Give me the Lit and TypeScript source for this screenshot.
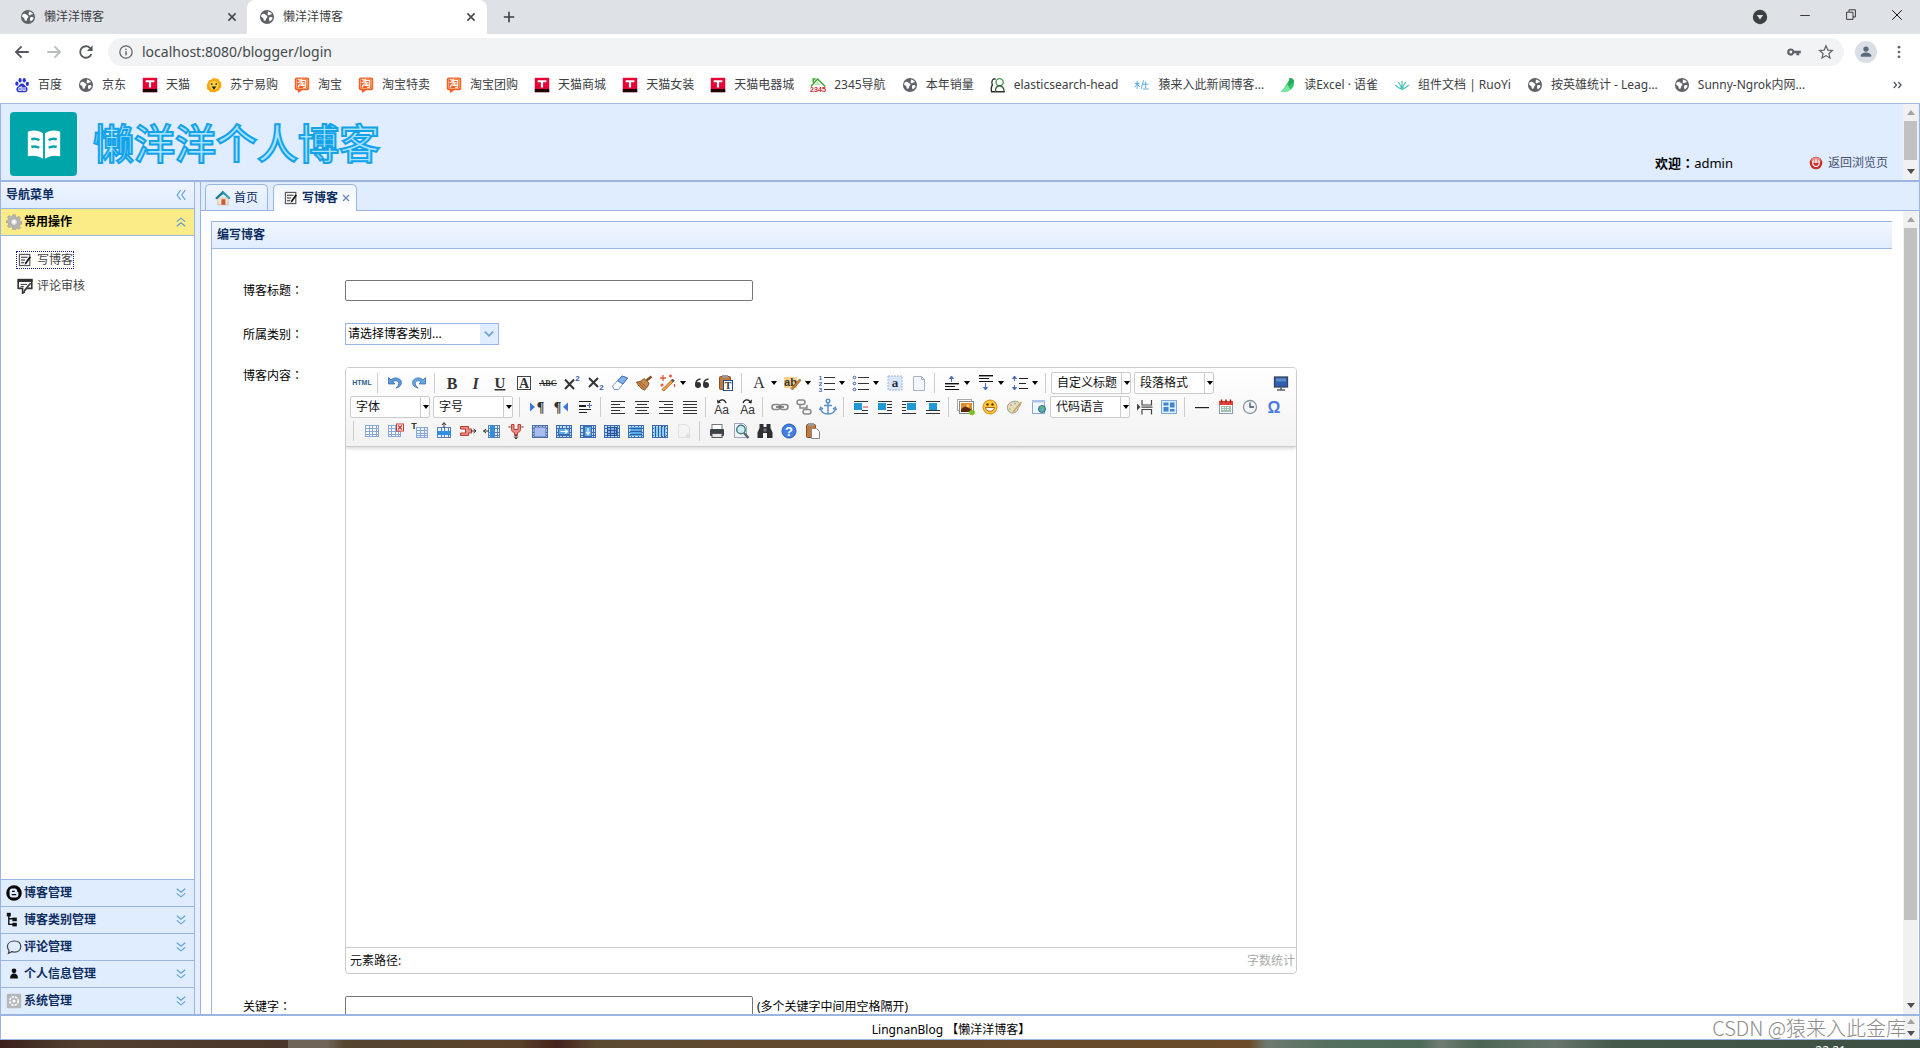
import { LitElement, html, css, svg, nothing, TemplateResult } from "lit";
import { customElement, property } from "lit/decorators.js";
import { classMap } from "lit/directives/class-map.js";
import { styleMap } from "lit/directives/style-map.js";

/* ---------- icon set, drawn on a 20 x 20 grid ---------- */

const lines = (rows: number[][], color = "#333") =>
  rows.map(([x, y, w]) => svg`<rect x=${x} y=${y} width=${w} height="1" fill=${color}></rect>`);

const grid = (x: number, y: number, w: number, h: number, cols: number, rows: number, fill = "#fff", stroke = "#5b7fb8") => svg`
  <rect x=${x + 0.5} y=${y + 0.5} width=${w - 1} height=${h - 1} fill=${fill} stroke=${stroke}></rect>
  ${Array.from({ length: cols - 1 }, (_, i) => svg`<rect x=${x + Math.round(((i + 1) * w) / cols)} y=${y} width="1" height=${h} fill=${stroke}></rect>`)}
  ${Array.from({ length: rows - 1 }, (_, i) => svg`<rect x=${x} y=${y + Math.round(((i + 1) * h) / rows)} width=${w} height="1" fill=${stroke}></rect>`)}`;

const serif = "Liberation Serif, serif";
const sans = "Liberation Sans, sans-serif";
const label = (t: string, x: number, y: number, size: number, extra: { weight?: string; style?: string; fill?: string; family?: string; deco?: string } = {}) => svg`
  <text x=${x} y=${y} text-anchor="middle" font-size=${size} font-family=${extra.family ?? serif}
    font-weight=${extra.weight ?? "normal"} font-style=${extra.style ?? "normal"} text-decoration=${extra.deco ?? "none"}
    fill=${extra.fill ?? "#333"}>${t}</text>`;

const ICONS: Record<string, TemplateResult | unknown> = {
  /* browser */
  globe: svg`<circle cx="10" cy="10" r="8.8" fill="#5f6368"></circle><path d="M3.200 6.800c2-1.600 4-1 5 .4s2 .6 2.300 2.300-1.500 1.700-1.700 3.200c-.2 1.300-1.500 2.800-2.600 1.700C5.500 13.500 6.100 12.300 4.900 11.300 4 10.700 2.800 10.400 2.600 9.200z" fill="#fff"></path><path d="M11 3c1.800 0 4.200 1.200 5.300 3.300-1 .7-2.200 .4-3.100 1.200-1 .9-2.500 .1-2.500-1.200 0-1.200 .8-1.700 .3-3.300z" fill="#fff"></path><path d="M13 10.500c1.300-.9 3.300-.4 4 .8-.4 1.600-2 3.600-3.500 4.200-.9-1.200-1.600-4-.5-5z" fill="#fff"></path>`,
  x: svg`<path d="M5.500 5.500l9 9m0-9l-9 9" stroke="#45494d" stroke-width="2" fill="none"></path>`,
  tabx: svg`<path d="M4 4l12 12m0-12L4 16" stroke="#6b87b5" stroke-width="2.600" fill="none"></path>`,
  plus: svg`<path d="M10 3.500v13M3.500 10h13" stroke="#3c4043" stroke-width="2" fill="none"></path>`,
  back: svg`<path d="M17.500 10H3.500M9.500 3.800L3.300 10l6.200 6.200" stroke="#54585d" stroke-width="2" fill="none"></path>`,
  forward: svg`<path d="M2.500 10h14M10.500 3.800l6.200 6.200-6.200 6.200" stroke="#b9bcc0" stroke-width="2" fill="none"></path>`,
  reload: svg`<path d="M15.900 12.300a6.400 6.400 0 1 1-1.300-6.700" stroke="#54585d" stroke-width="2" fill="none"></path><path d="M17.300 2.500v6.300h-6.300z" fill="#54585d"></path>`,
  info: svg`<circle cx="10" cy="10" r="7.700" stroke="#5f6368" stroke-width="1.600" fill="none"></circle><path d="M10 9v5.200M10 5.800v1.800" stroke="#5f6368" stroke-width="1.800"></path>`,
  key: svg`<path d="M6 5.500a4.500 4.500 0 1 0 4.200 6H13V14h3.500v-2.500H18.500V8.500H10.200A4.500 4.500 0 0 0 6 5.500z" fill="#5f6368"></path><circle cx="6" cy="10" r="1.800" fill="#f1f3f4"></circle>`,
  star: svg`<path d="M10 2.300l2.300 5.300 5.700 .5-4.300 3.800 1.300 5.600-5-3-5 3 1.300-5.600L2 8.100l5.700-.5z" stroke="#5f6368" stroke-width="1.500" fill="none"></path>`,
  person: svg`<circle cx="10" cy="6.300" r="3.300" fill="#5a6a7c"></circle><path d="M3.500 16v-1.500c0-2.700 4.300-3.900 6.500-3.900s6.500 1.200 6.500 3.900V16z" fill="#5a6a7c"></path>`,
  dots: svg`<g fill="#5f6368"><circle cx="10" cy="4" r="1.700"></circle><circle cx="10" cy="10" r="1.700"></circle><circle cx="10" cy="16" r="1.700"></circle></g>`,
  badge: svg`<circle cx="10" cy="10" r="9" fill="#3c4043"></circle><path d="M6 7.500h8L10 13z" fill="#dee1e6"></path>`,
  min: svg`<rect x="4" y="10" width="12" height="1" fill="#111"></rect>`,
  restore: svg`<path d="M4.500 6.500h8v9h-8zM7.500 6V3.500h8v9h-3" fill="none" stroke="#111"></path>`,
  winclose: svg`<path d="M4 4l12 12M16 4L4 16" stroke="#111" stroke-width="1.200"></path>`,
  baidu: svg`<g fill="#2a32d6"><ellipse cx="3.600" cy="8.300" rx="2" ry="2.700"></ellipse><ellipse cx="7.600" cy="4" rx="2" ry="2.900"></ellipse><ellipse cx="12.800" cy="4" rx="2" ry="2.900"></ellipse><ellipse cx="16.700" cy="8.700" rx="2" ry="2.700"></ellipse><path d="M10 8c2.500 0 3.500 2.800 5.500 4.300 2.600 2 1.800 6.700-1.700 6.700H6.200c-3.500 0-4.300-4.700-1.700-6.700C6.500 10.800 7.500 8 10 8z"></path></g>${label("du", 10, 17.5, 8, { fill: "#fff", family: sans, weight: "bold" })}`,
  tmall: svg`<rect x="1" y="1" width="18" height="18" fill="#e60033"></rect><rect x="1" y="15" width="18" height="4" fill="#1c0206"></rect><path d="M4.500 4h11v2.600h-4.100V13H8.600V6.600H4.500z" fill="#fff"></path>`,
  suning: svg`<path d="M10 .8l2.400 1.500 2.900 0 1.300 2.600 2.500 1.700-.4 2.900 .7 2.900-2.200 2-1 2.700-2.900 .6-2.300 1.600-3-.6-2.900 .1L3.500 16.600 1.200 14.900l.2-2.900L.7 9.300l1.900-2.200 .8-2.800 2.800-.8z" fill="#f9a809"></path><circle cx="10" cy="10.500" r="5.500" fill="#ffd04a"></circle><circle cx="7.200" cy="8.800" r="1.100" fill="#222"></circle><circle cx="12.800" cy="8.800" r="1.100" fill="#222"></circle><path d="M7 12h6l-3 4z" fill="#222"></path>`,
  taobao: svg`<rect x="1" y=".5" width="18" height="16" rx="2.500" fill="#ef5a1a"></rect><path d="M4.500 15.500h6.500L5.500 20z" fill="#ef5a1a"></path><rect x="3" y="2.500" width="14" height="12" rx="1.500" fill="none" stroke="#fbd3bd" stroke-width=".8"></rect>${label("淘", 10, 13, 12, { fill: "#fff", family: "Noto Sans CJK SC, sans-serif", weight: "bold" })}`,
  house2345: svg`<path d="M1 12L9.500 2.500 19 12" fill="none" stroke="#39a52c" stroke-width="1.800"></path><path d="M4 7V2.500h3" stroke="#39a52c" stroke-width="1.800" fill="none"></path><path d="M9.500 5l-4 5h8z" fill="#bfe6b8"></path>${label("2345", 10, 19.3, 9, { fill: "#d2282a", family: sans, weight: "bold" })}`,
  elastic: svg`<path d="M7 2.500H4.500C2 4 2.200 8 3 10c-1.500 2-1.500 6-1 8.500h16.500" fill="none" stroke="#2c2f2c" stroke-width="1.800"></path><circle cx="12" cy="6.500" r="4.500" fill="#fff" stroke="#4b9a4d" stroke-width="1.800"></circle><path d="M7 18.500c-1-4 1.500-7.500 5-7.500s6 3.500 5.500 7.500" fill="none" stroke="#3a5a3a" stroke-width="1.800"></path>`,
  news: svg`<g stroke="#5aa9e6" stroke-width="1.200" fill="none"><path d="M1 8h6M4 5v10M4 8.500L1 13m3-4.500l3 4"></path><path d="M12 4l-3 11M11 9h7M14.500 6v8M11.500 15h7"></path></g>`,
  yuque: svg`<path d="M12 1c3 .5 5.500 2 5.500 4.500C18.500 14 11 20 1 18.500c2.800-2.500 5.500-6 7.500-10C9.500 6.500 12 4 12 1z" fill="#2fc66a"></path><path d="M12 1c3 .5 5.500 2 5.500 4.500L10 12z" fill="#25a85a"></path><path d="M1 18.500c3.500-2 6-5 8-9l4 6c-3 2.500-7 3.500-12 3z" fill="#7be89f"></path>`,
  ruoyi: svg`<g fill="none" stroke="#4fc3b5" stroke-width="1.500"><path d="M10 15.500V5M10 15.500C8.500 12 7.500 9 5.500 6.500M10 15.500c1.500-3.500 2.500-6.500 4.500-9M10 15.500C7 14.500 4 12.500 1.500 10M10 15.500c3-1 6-3 8.500-5.500"></path></g>`,
  more: svg`<path d="M3 5l4.500 5L3 15M10.500 5l4.500 5-4.500 5" fill="none" stroke="#54585d" stroke-width="2.200"></path>`,

  /* page */
  book: svg`<g fill="#fff"><path d="M1.500 3.500c3-1 5.500-.8 8 .8v13.500C7 16.200 4.500 15.800 1.500 16.500z"></path><path d="M18.500 3.500c-3-1-5.500-.8-8 .8v13.500c2.500-1.600 5-2 8-1.300z"></path></g><g stroke="#00a5a9" stroke-width="1.300" fill="none"><path d="M3.300 7.500c1.500-.4 3-.3 4.200 .5M3.300 11.500c1.500-.4 3-.3 4.200 .5M16.700 7.500c-1.500-.4-3-.3-4.200 .5M16.700 11.500c-1.500-.4-3-.3-4.200 .5"></path></g>`,
  power: svg`<circle cx="10" cy="10" r="9" fill="#c9302c"></circle><ellipse cx="10" cy="6" rx="6.500" ry="4.300" fill="#e58d88"></ellipse><path d="M7 6.500a4.700 4.700 0 1 0 6 0M10 4.500V10" fill="none" stroke="#fff" stroke-width="1.700"></path>`,
  gear: svg`<g fill="#b5b5b5" stroke="#8b8b8b" stroke-width=".6"><path d="M8.500 1h3l.5 2.500 2 .8 2.200-1.400 2 2-1.400 2.200 .8 2 2.400 .5v2.800l-2.400 .5-.8 2 1.400 2.200-2 2-2.200-1.400-2 .8-.5 2.500h-3L8 16.500l-2-.8-2.200 1.400-2-2 1.400-2.200-.8-2L0 10.400V8.600l2.400-.5 .8-2-1.400-2.200 2-2L6 3.300l2-.8z"></path></g><circle cx="10" cy="10" r="4.300" fill="#e3e3e3" stroke="#999"></circle><circle cx="10" cy="10" r="1.800" fill="#fff"></circle>`,
  chevUp: svg`<path d="M4 9.500l6-5 6 5M4 16l6-5 6 5" fill="none" stroke="#5b9bd5" stroke-width="1.600"></path>`,
  chevDown: svg`<path d="M4 4l6 5 6-5M4 10.500l6 5 6-5" fill="none" stroke="#5ba0d5" stroke-width="1.600"></path>`,
  chevLeft: svg`<path d="M9.500 3l-5 7 5 7M16 3l-5 7 5 7" fill="none" stroke="#5b9bd5" stroke-width="1.500"></path>`,
  write: svg`<rect x="3" y="3" width="13" height="14" fill="#f5f5f5" stroke="#555" stroke-width="1.400"></rect><path d="M5 6.500h8M5 10h5M5 13.500h4" stroke="#333" stroke-width="1.400"></path><path d="M17.500 6.500l-5.500 8-2.500 1.500 .8-3L15.500 5.500z" fill="#111"></path>`,
  review: svg`<path d="M1.500 3h17v10H12M1.500 3v10H7V19l3-2" fill="none" stroke="#333" stroke-width="2"></path><rect x=".5" y="1" width="19" height="4" fill="#333"></rect><path d="M4.500 8h8M4.500 10.500h4" stroke="#333" stroke-width="1.200"></path><path d="M18 7l-7 9-3 3 .5-4L16 6z" fill="#444"></path>`,
  home: svg`<path d="M3.500 10h13v8.500h-13z" fill="#f6e7d2" stroke="#b5916b" stroke-width=".6"></path><path d="M10 1L.5 10l1.600 1.700L10 5l7.900 6.700L19.500 10z" fill="#2a9bb0"></path><path d="M10 1L.5 10l1.600 1.700L10 5z" fill="#1f7d95"></path><rect x="8" y="11.500" width="5" height="7" fill="#c75b39"></rect>`,
  blogger: svg`<circle cx="10" cy="10" r="9.700" fill="#050505"></circle><path d="M7.500 4.500h3.500c1.800 0 3 1.300 3 3 0 1 .2 1.500 1.500 1.500V12.500c0 2-1.300 3-3 3h-5c-1.800 0-3-1.200-3-3v-5c0-1.800 1.200-3 3-3z" fill="#e0ecff"></path><path d="M7.500 8h3.500M7.200 12h5.600" stroke="#050505" stroke-width="1.500"></path>`,
  tree: svg`<path d="M3.500 2.500v13h6M3.500 8.500h6" fill="none" stroke="#111" stroke-width="1.700"></path><rect x="1" y="1" width="5" height="4.500" fill="#111"></rect><rect x="8" y="7" width="5.500" height="4.500" fill="#111"></rect><rect x="8" y="13.500" width="5.500" height="4.500" fill="#111"></rect>`,
  bubble: svg`<path d="M10.500 2.500c5 0 8 2.800 8 6.800s-3 7-8 7c-1.200 0-2.300-.2-3.300-.5L3 18l.8-3.700C2.400 13 1.800 11.300 1.800 9.500c0-4 3.500-7 8.700-7z" fill="none" stroke="#444" stroke-width="1.500"></path>`,
  user: svg`<circle cx="10" cy="6" r="3" fill="#111"></circle><path d="M5 15.500c0-4 2-6 5-6s5 2 5 6z" fill="#111"></path>`,
  system: svg`<rect x="1" y="1" width="18" height="18" rx="1.500" fill="#b5b8bb"></rect><circle cx="10" cy="10" r="5.300" fill="none" stroke="#fff" stroke-width="2" stroke-dasharray="3 1.300"></circle><circle cx="10" cy="10" r="2" fill="#fff"></circle>`,
  down: svg`<path d="M3 6l7 7 7-7" fill="none" stroke="#6fa3d8" stroke-width="3"></path>`,

  /* editor */
  source: label("HTML", 10, 12, 7, { family: sans, fill: "#2f5f8f", weight: "bold" }),
  undo: svg`<path d="M3.500 4.500v6.500h6.500L7.800 8.800C9 7.500 12.500 7.200 13.500 9.300c.8 1.900-.3 3.900-2.700 5.700C15 14.300 17 11.500 16.300 8.500 15.400 4.800 9.500 3.500 5.800 6.800z" fill="#5a97de" stroke="#2d63a8" stroke-width=".7"></path>`,
  redo: svg`<path d="M16.500 4.500v6.500h-6.500L12.200 8.800C11 7.500 7.500 7.200 6.500 9.300c-.8 1.900 .3 3.900 2.700 5.700C5 14.300 3 11.500 3.700 8.500 4.600 4.800 10.500 3.500 14.200 6.800z" fill="#6aa6e4" stroke="#2d63a8" stroke-width=".7"></path>`,
  bold: label("B", 10, 15.5, 16, { weight: "bold" }),
  italic: label("I", 9.5, 15.5, 16, { weight: "bold", style: "italic" }),
  underline: label("U", 10, 15, 15, { weight: "bold", deco: "underline" }),
  fontborder: svg`<rect x="3.500" y="3.500" width="13" height="13" fill="#fff" stroke="#444"></rect>${label("A", 10, 15, 14, { weight: "bold" })}`,
  strike: svg`${label("ABC", 10, 13, 8, { weight: "bold" })}<rect x="1" y="10" width="18" height="1" fill="#222"></rect>`,
  sup: svg`<path d="M3 6.500l9 9.500M12 6.500L3 16" stroke="#333" stroke-width="2"></path>${label("2", 15.5, 8, 8, { weight: "bold", fill: "#3759a8", family: sans })}`,
  sub: svg`<path d="M3 5l9 9M12 5l-9 9" stroke="#333" stroke-width="2"></path>${label("2", 15.5, 17, 8, { weight: "bold", fill: "#3759a8", family: sans })}`,
  eraser: svg`<path d="M2.500 13L12 3l5.500 2-9 11.500H4z" fill="#fff" stroke="#6f94c9"></path><path d="M7.500 8L12 3l5.500 2-4.500 6z" fill="#7fb0ea" stroke="#4a76b5"></path>`,
  broom: svg`<path d="M17.500 3.500l-5 4" stroke="#8a4a1c" stroke-width="2.400"></path><path d="M2.500 9c3 0 5.500-1 7.500-3.500l5 4.500c-.5 2.500-2 5-4.500 7-3.500-1-6.500-4.500-8-8z" fill="#c98b4b" stroke="#8a5527"></path><path d="M6 8.500l6 5.500M4.500 9.500l6 6" stroke="#8a5527" stroke-width=".8"></path>`,
  wand: svg`<path d="M4 16.500L14.500 6l1.800 1.800L6 18z" fill="#e8a04a" stroke="#a9601a" stroke-width=".8"></path><path d="M13 7.500l1.500-1.500 1.800 1.800-1.500 1.500z" fill="#555"></path><path d="M5 2v6M2 5h6M12.500 1.500v3M11 3h3M4 10.500v3M2.500 12h3M16.500 11v3" stroke="#e2553a" stroke-width="1.300"></path>`,
  quote: svg`<g fill="#333"><circle cx="6" cy="12" r="3"></circle><circle cx="14" cy="12" r="3"></circle></g><path d="M3.800 12C3.500 8.500 5 6.500 8.500 6M11.800 12c-.3-3.500 1.200-5.500 4.700-6" fill="none" stroke="#333" stroke-width="1.600"></path>`,
  pastetext: svg`<rect x="3.500" y="3.500" width="11" height="13" rx="1" fill="#c07a3c" stroke="#8a5022"></rect><rect x="6" y="2" width="6" height="3" fill="#999"></rect><rect x="7.500" y="7.500" width="9" height="10" fill="#fff" stroke="#2c4d80"></rect>${label("T", 12, 16, 10, { weight: "bold" })}`,
  paste: svg`<rect x="3.500" y="3.500" width="9" height="13" rx="1" fill="#c07a3c" stroke="#8a5022"></rect><rect x="5" y="2" width="6" height="3" fill="#999"></rect><path d="M8.500 7.500h5l3 3v7h-8z" fill="#fff" stroke="#888"></path>`,
  forecolor: label("A", 10, 15, 16, {}),
  backcolor: svg`<rect x="1" y="4" width="13" height="11" fill="#fbd08a"></rect>${label("ab", 7.5, 13, 11, { family: sans, weight: "bold" })}<path d="M8 15.500L16.500 6l1.500 1.300L9.500 17z" fill="#c78234" stroke="#7d4c18" stroke-width=".6"></path>`,
  ol: svg`${lines([[7, 4, 11], [7, 10, 11], [7, 16, 11]])}${label("1", 3.5, 6.5, 6, { fill: "#3759a8", family: sans, weight: "bold" })}${label("2", 3.5, 12.5, 6, { fill: "#3759a8", family: sans, weight: "bold" })}${label("3", 3.5, 18.5, 6, { fill: "#3759a8", family: sans, weight: "bold" })}`,
  ul: svg`${lines([[7, 4, 11], [7, 10, 11], [7, 16, 11]])}<g fill="none" stroke="#3759a8"><circle cx="3.500" cy="4.500" r="1.300"></circle><circle cx="3.500" cy="10.500" r="1.300"></circle><circle cx="3.500" cy="16.500" r="1.300"></circle></g>`,
  selectall: svg`<rect x="3" y="3" width="14" height="14" fill="#dbe6f8" stroke="#9db8e0" stroke-dasharray="2 1"></rect>${label("a", 10, 14, 13, { weight: "bold", fill: "#1d2c4d" })}`,
  cleardoc: svg`<path d="M4.500 3.500h8l3 3v11h-11z" fill="#f4f7fb" stroke="#a9b4c4"></path><path d="M12.500 3.500v3h3" fill="none" stroke="#a9b4c4"></path>`,
  rowtop: svg`${lines([[3, 10, 14], [3, 13, 10], [3, 16, 14]], "#111")}${lines([[3, 11, 14]], "#999")}<path d="M9.500 9V4M7.500 5.500l2-2.500 2 2.500z" stroke="#4c6cb8" fill="#4c6cb8"></path>`,
  rowbottom: svg`${lines([[3, 2, 14], [3, 5, 10], [3, 8, 14]], "#111")}${lines([[3, 3, 14]], "#999")}<path d="M9.500 10v5M7.500 14.500l2 2.500 2-2.500z" stroke="#4c6cb8" fill="#4c6cb8"></path>`,
  lineheight: svg`${lines([[9, 5, 9], [9, 10, 7], [9, 15, 9]], "#222")}<path d="M4.500 3v5M2.500 5.500l2-2.500 2 2.500zM4.500 12v5M2.500 14.500l2 2.500 2-2.500z" stroke="#4c6cb8" fill="#4c6cb8"></path>`,
  fullscreen: svg`<rect x="3.500" y="4" width="13" height="10" fill="#2f5fae" stroke="#39465e" stroke-width="1.300"></rect><rect x="5" y="5.500" width="10" height="3" fill="#5f8bd0"></rect><path d="M6 17h8M10 14v3" stroke="#5c6470" stroke-width="1.600"></path>`,
  ltr: svg`<path d="M3 5.500v9l5-4.500z" fill="#3f74d8"></path>${label("¶", 13.5, 15, 14, { weight: "bold" })}`,
  rtl: svg`${label("¶", 6.5, 15, 14, { weight: "bold" })}<path d="M17 5.500v9L12 10z" fill="#3f74d8"></path>`,
  indent: svg`${lines([[4, 4, 12], [4, 8, 7], [4, 9, 7], [4, 12, 12], [4, 15, 8]], "#222")}<path d="M14.500 6v5M12 8.500h5" stroke="#5575bb" stroke-width="1.200"></path>`,
  left: svg`${lines([[3, 4, 14], [3, 7, 9], [3, 10, 14], [3, 13, 9], [3, 16, 14]])}`,
  center: svg`${lines([[3, 4, 14], [5, 7, 10], [3, 10, 14], [5, 13, 10], [3, 16, 14]])}`,
  right: svg`${lines([[3, 4, 14], [8, 7, 9], [3, 10, 14], [8, 13, 9], [3, 16, 14]])}`,
  full: svg`${lines([[3, 4, 14], [3, 7, 14], [3, 10, 14], [3, 13, 14], [3, 16, 14]])}`,
  upper: svg`${label("Aa", 8.5, 17, 12, { family: sans })}<path d="M5.500 5c2-3 6-3 7.500 1" fill="none" stroke="#222" stroke-width="1.200"></path><path d="M4 2.500l.5 4 3.500-1z" fill="#222"></path>`,
  lower: svg`${label("Aa", 10.5, 17, 12, { family: sans })}<path d="M6 6c1.500-4 5.500-4 7.500-1" fill="none" stroke="#222" stroke-width="1.200"></path><path d="M15 2.500l-.5 4-3.500-1z" fill="#222"></path>`,
  link: svg`<g fill="none" stroke="#888" stroke-width="1.600"><rect x="2" y="7.500" width="8" height="5" rx="2.500"></rect><rect x="10" y="7.500" width="8" height="5" rx="2.500"></rect></g><path d="M6 10h8" stroke="#666" stroke-width="1.400"></path>`,
  unlink: svg`<g fill="none" stroke="#888" stroke-width="1.500"><rect x="3" y="3" width="8" height="4.500" rx="2.200"></rect><rect x="9" y="12.500" width="8" height="4.500" rx="2.200"></rect><path d="M6 7.500v3.500h7v-3"></path></g>`,
  anchor: svg`<g fill="none" stroke="#5b93cc" stroke-width="1.500"><circle cx="10" cy="4" r="1.800"></circle><path d="M10 6v11M6 8.500h8M2.500 11c.5 4 3.500 6 7.500 6s7-2 7.500-6M1.500 13l1.200-2.500 2.300 1.700M18.500 13l-1.200-2.500-2.300 1.700"></path></g>`,
  imgleft: svg`${lines([[3, 4, 14], [11, 13, 6], [3, 16, 14]])}<rect x="3" y="6" width="8" height="7" fill="#1f9ad6"></rect><path d="M12 10h5" stroke="#c43" stroke-width="1"></path>`,
  imgfloatl: svg`${lines([[3, 4, 14], [12, 7, 5], [12, 10, 5], [12, 13, 5], [3, 16, 14]])}<rect x="3" y="6" width="8" height="7" fill="#1f9ad6"></rect>`,
  imgfloatr: svg`${lines([[3, 4, 14], [3, 7, 4], [3, 10, 4], [3, 13, 4], [3, 16, 14]])}<rect x="8" y="6" width="9" height="7" fill="#1f9ad6"></rect>`,
  imgcenter: svg`${lines([[3, 4, 14], [3, 16, 14]])}<rect x="6" y="6" width="8" height="7" fill="#1f9ad6"></rect>${lines([[3, 13, 14]])}`,
  image: svg`<rect x="1.500" y="2.500" width="14" height="11" fill="#fff" stroke="#aaa"></rect><rect x="3.500" y="4.500" width="14" height="12" fill="#fff" stroke="#888"></rect><rect x="5" y="6" width="11" height="9" fill="#e08a2e"></rect><path d="M5 15v-3l4-2.500 7 3V15z" fill="#5a2708"></path><circle cx="12" cy="8.500" r="1.500" fill="#ffd76a"></circle><circle cx="16" cy="15.500" r="2.800" fill="#7cc21f"></circle>`,
  emotion: svg`<circle cx="10" cy="10" r="7" fill="#ffc83a" stroke="#d78a12"></circle><path d="M5.500 10.500h9c-.5 5-8.500 5-9 0z" fill="#fff" stroke="#8a4a0a" stroke-width=".8"></path><circle cx="7.500" cy="7.500" r="1.200" fill="#5a3205"></circle><circle cx="12.500" cy="7.500" r="1.200" fill="#5a3205"></circle>`,
  scrawl: svg`<path d="M4 8c2-4 9-5 11.500-2 2 2.500-1 4-1.500 6s-3 4.500-6.500 4C4 15.500 2.500 11 4 8z" fill="#e6dcc0" stroke="#a39a7c"></path><circle cx="7" cy="8" r="1.100" fill="#e5a08a"></circle><circle cx="11" cy="6.500" r="1.100" fill="#8fbde0"></circle><circle cx="6" cy="12" r="1.100" fill="#a0cf8e"></circle><path d="M17.500 5L9 15" stroke="#c9a468" stroke-width="1.500"></path>`,
  map: svg`<rect x="4.500" y="3.500" width="12" height="13" fill="#f3f6fb" stroke="#8aa5cf"></rect><rect x="4" y="3" width="13" height="2.500" fill="#a9c3ea"></rect><circle cx="14" cy="12" r="3.500" fill="#4fa3c7" stroke="#2c6d94"></circle><path d="M12.500 10c2-.5 3.500 1 2.200 2.300s-1.400 1-1.400 2.200" fill="none" stroke="#6fc05a" stroke-width="1.500"></path>`,
  pagebreak: svg`<g fill="none" stroke="#444" stroke-width="1.200"><path d="M7 3v5h9.500V3M7 17.500v-5h9.500v5M6.500 10.200h11"></path></g><path d="M2 6.500v7l3.500-3.500z" fill="#444"></path>`,
  template: svg`<rect x="2.500" y="3.500" width="15" height="13" fill="#dcecfb" stroke="#7fa9d6"></rect><g fill="#3f86cf"><rect x="4.500" y="5.500" width="5" height="3"></rect><rect x="4.500" y="10" width="5" height="4.500"></rect><rect x="11" y="5.500" width="4.500" height="5"></rect><rect x="11" y="12" width="4.500" height="2.500"></rect></g>`,
  hr: svg`<rect x="3" y="10" width="14" height="1.200" fill="#222"></rect>`,
  date: svg`<rect x="3.500" y="4.500" width="13" height="12" fill="#fff" stroke="#8a9ab5"></rect><rect x="3" y="4" width="14" height="4" fill="#e0413a"></rect><path d="M5.500 2.500v3M10 2.500v3M14.500 2.500v3" stroke="#a32019" stroke-width="1.500"></path>${grid(5, 9, 10, 6, 4, 3, "#fff", "#9fc3b0")}`,
  time: svg`<circle cx="10" cy="10" r="6.500" fill="#f2f5fa" stroke="#8d95a2" stroke-width="1.300"></circle><path d="M10 5.500V10h4" fill="none" stroke="#3c4a61" stroke-width="1.300"></path>`,
  spechars: label("Ω", 10, 15.5, 16, { weight: "bold", fill: "#4a7ae0", family: sans }),

  table: grid(3, 4, 14, 12, 4, 4, "#fff", "#88a7d4"),
  deltable: svg`${grid(2, 4, 13, 12, 4, 4, "#fff", "#88a7d4")}<rect x="10.500" y="3" width="7" height="7" fill="#fff" stroke="#d8362d"></rect><path d="M12 4.500l4 4m0-4l-4 4" stroke="#d8362d" stroke-width="1.400"></path>`,
  beforetable: svg`${grid(6, 6, 12, 11, 3, 4, "#e8f0fb", "#88a7d4")}${label("T", 4, 8, 9, { weight: "bold", family: sans })}`,
  insrow: svg`${grid(3, 6, 14, 11, 4, 3, "#e8f2fd", "#5b7fb8")}<rect x="3" y="10" width="14" height="4" fill="#2f8fe0"></rect><path d="M10 7V2M8 4l2-2.500L12 4" stroke="#333" fill="none"></path>`,
  delrow: svg`<path d="M2.500 5.500h8v2.500h3v4h-3v2.500h-8V12h5V8h-5z" fill="#e88d86" stroke="#c23b33"></path><path d="M13 10h5M15.500 8l2.500 2-2.500 2" stroke="#333" fill="none"></path>`,
  inscol: svg`${grid(6, 4, 12, 13, 4, 4, "#e8f2fd", "#5b7fb8")}<rect x="8" y="4" width="4" height="13" fill="#2f8fe0"></rect><path d="M7 10H1.500M4 8l-2.500 2L4 12" stroke="#333" fill="none"></path>`,
  delcol: svg`<path d="M5.500 3.500H8v5h4v-5h2.500v5c0 2-1.500 3-3 3v3h-3v-3c-1.500 0-3-1-3-3z" fill="#e88d86" stroke="#c23b33"></path><path d="M10 13v5M8 15.500l2 2.500 2-2.500M2.500 6h2M15.500 6h2" stroke="#333" fill="none"></path>`,
  merge: svg`${grid(2, 4, 16, 13, 5, 4, "#e8f2fd", "#4a6ea8")}<rect x="4" y="6" width="12" height="10" fill="#a9bdf0" stroke="#4a6ea8"></rect>`,
  mergeright: svg`${grid(2, 4, 16, 13, 5, 4, "#bfdcf7", "#3f6cae")}<rect x="4.500" y="7.500" width="11" height="6" fill="#5aa9ea" stroke="#3f6cae"></rect><path d="M6.500 10.500h6M11 8.500l2.500 2-2.500 2" stroke="#fff" stroke-width="1.200" fill="none"></path>`,
  mergedown: svg`${grid(2, 4, 16, 13, 5, 4, "#bfdcf7", "#3f6cae")}<rect x="6.500" y="5.500" width="7" height="10" fill="#5aa9ea" stroke="#3f6cae"></rect><path d="M10 7v6M8 11l2 2.500 2-2.500" stroke="#fff" stroke-width="1.200" fill="none"></path>`,
  splitcell: svg`${grid(2, 4, 16, 13, 5, 4, "#bfdcf7", "#3f6cae")}${grid(5, 6, 10, 9, 3, 3, "#7fb4ee", "#2d4f93")}`,
  splitrow: svg`${grid(2, 4, 16, 13, 5, 4, "#bfdcf7", "#3f6cae")}<rect x="4.500" y="6" width="11" height="9" fill="#5aa9ea"></rect>${lines([[4, 7, 12], [4, 10, 12], [4, 13, 12]], "#2d5f9f")}`,
  splitcol: svg`${grid(2, 4, 16, 13, 5, 4, "#bfdcf7", "#3f6cae")}<rect x="4" y="6" width="12" height="9" fill="#8ccbf5"></rect><path d="M5.500 5v11M8.500 5v11M11.500 5v11M14.500 5v11" stroke="#2d5f9f"></path>`,
  chart: svg`<g opacity=".25"><path d="M4.500 3.500h8l3 3v10h-11z" fill="#f2f2f2" stroke="#aaa"></path><circle cx="14" cy="15" r="2.500" fill="#9b9"></circle></g>`,
  print: svg`<rect x="5" y="3.500" width="10" height="5" fill="#fff" stroke="#777"></rect><rect x="3" y="8" width="14" height="7" rx="1" fill="#3d4148"></rect><rect x="5" y="12.500" width="10" height="4" fill="#e6e6e6" stroke="#555"></rect>`,
  preview: svg`<path d="M3.500 2.500h9l3 3v11h-12z" fill="#f2f6fb" stroke="#9aa7ba"></path><circle cx="10" cy="8.500" r="4.300" fill="#cdeef0" stroke="#4a7f8a" stroke-width="1.500"></circle><path d="M13 12l4.500 5" stroke="#5a5f66" stroke-width="2.300"></path>`,
  search: svg`<path d="M4.500 3h4v3h3V3h4v4l2 4.500V17h-5.500v-5H8v5H2.500v-5.500l2-4.500z" fill="#2e3034"></path><path d="M8.500 7.500h3v3h-3z" fill="#777"></path>`,
  help: svg`<circle cx="10" cy="10" r="7" fill="#3f7fe6" stroke="#2459b4"></circle>${label("?", 10, 14.5, 13, { weight: "bold", fill: "#fff", family: sans })}`,
};

const icon = (name: string, cls = "i20") => html`<svg class=${cls} viewBox="0 0 20 20" aria-hidden="true">${ICONS[name]}</svg>`;

/* full-width colon, centred in its cell */
const colon = html`<span class="colon">：</span>`;

type Tool = string | { select: string };

const TOOLBAR: Tool[][] = [
  ["source", "|", "undo", "redo", "|", "bold", "italic", "underline", "fontborder", "strike", "sup", "sub", "eraser", "broom", "wand+", "quote", "pastetext", "|",
    "forecolor+", "backcolor+", "ol+", "ul+", "selectall", "cleardoc", "|", "rowtop+", "rowbottom+", "lineheight+", "|", { select: "自定义标题" }, { select: "段落格式" }, ">", "fullscreen"],
  [{ select: "字体" }, { select: "字号" }, "|", "ltr", "rtl", "indent", "|", "left", "center", "right", "full", "|", "upper", "lower", "|", "link", "unlink", "anchor", "|",
    "imgleft", "imgfloatl", "imgfloatr", "imgcenter", "|", "image", "emotion", "scrawl", "map", { select: "代码语言" }, "pagebreak", "template", "|", "hr", "date", "time", "spechars"],
  ["|", "table", "deltable", "beforetable", "insrow", "delrow", "inscol", "delcol", "merge", "mergeright", "mergedown", "splitcell", "splitrow", "splitcol", "chart", "|", "print", "preview", "search", "help", "paste"],
];

const BOOKMARKS: [string, string][] = [
  ["baidu", "百度"], ["globe", "京东"], ["tmall", "天猫"], ["suning", "苏宁易购"], ["taobao", "淘宝"], ["taobao", "淘宝特卖"], ["taobao", "淘宝团购"],
  ["tmall", "天猫商城"], ["tmall", "天猫女装"], ["tmall", "天猫电器城"], ["house2345", "2345导航"], ["globe", "本年销量"], ["elastic", "elasticsearch-head"],
  ["news", "猿来入此新闻博客..."], ["yuque", "读Excel · 语雀"], ["ruoyi", "组件文档 | RuoYi"], ["globe", "按英雄统计 - Leag..."], ["globe", "Sunny-Ngrok内网..."],
];

const SECTIONS: [string, string][] = [
  ["blogger", "博客管理"], ["tree", "博客类别管理"], ["bubble", "评论管理"], ["user", "个人信息管理"], ["system", "系统管理"],
];

const shared = css`
  * { box-sizing: border-box; }
  button, input, select { font: inherit; color: inherit; margin: 0; padding: 0; }
  button { border: 0; background: none; display: flex; align-items: center; }
  a { color: inherit; text-decoration: none; }
  svg { display: block; flex: none; }
  .i20 { width: 20px; height: 20px; }
  .i18 { width: 18px; height: 18px; }
  .i16 { width: 16px; height: 16px; }
  .i14 { width: 14px; height: 14px; }
  .i12 { width: 12px; height: 12px; }
  .i10 { width: 10px; height: 10px; }
  .colon { font-family: "Noto Sans CJK TC", sans-serif; }
`;

/* ---------- vertical scroll bar ---------- */

@customElement("scroll-rail")
class ScrollRail extends LitElement {
  @property({ type: Number }) size = 0;
  @property({ type: Boolean }) short = false;
  static styles = css`
    * { box-sizing: border-box; }
    :host { display: flex; flex-direction: column; width: 15px; flex: none; margin-right: 1px; background: #f1f1f1; }
    .end { height: 17px; flex: none; display: flex; align-items: center; justify-content: center; }
    .tight .end { height: 11px; }
    .wrap { display: flex; flex-direction: column; flex: 1; min-height: 0; }
    .track { flex: 1; min-height: 0; padding: 0 1px; }
    .thumb { background: #c1c1c1; }
    .arrow { border: 4px solid transparent; }
    .up { border-top: 0; border-bottom: 5px solid #a3a3a3; }
    .dn { border-bottom: 0; border-top: 5px solid #505050; }
  `;
  render() {
    return html`<div class=${classMap({ wrap: true, tight: this.short })}>
      <div class="end"><span class="arrow up"></span></div>
      <div class="track">${this.size ? html`<div class="thumb" style=${styleMap({ height: this.size + "%" })}></div>` : nothing}</div>
      <div class="end"><span class="arrow dn"></span></div>
    </div>`;
  }
}

/* ---------- browser frame ---------- */

@customElement("browser-frame")
class BrowserFrame extends LitElement {
  static styles = [shared, css`
    :host { display: block; flex: none; font: 12px/16px "Noto Sans", "Noto Sans CJK SC", sans-serif; color: #3c4043; background: #fff; }
    .strip { height: 34px; background: #dee1e6; display: flex; align-items: stretch; }
    .tab { width: 240px; display: flex; align-items: center; gap: 8px; height: 34px; }
    .tab:first-child { width: 247px; padding: 0 7px 0 20px; }
    .tab.on { background: #fff; border-radius: 8px 8px 0 0; padding: 0 8px 0 12px; }
    .tab .name { flex: 1; }
    .new { margin-left: 14px; }
    .win { margin-left: auto; display: flex; align-items: center; }
    .win button { width: 46px; justify-content: center; height: 28px; padding-bottom: 4px; }
    .win button:first-child { width: 44px; padding-bottom: 0; }
    .bar { height: 38px; display: flex; align-items: center; padding: 0 12px 2px; }
    .nav { width: 32px; height: 28px; justify-content: center; }
    .nav:first-child { margin-left: -6px; }
    .omni { flex: 1; height: 28px; margin-left: 6px; border-radius: 14px; background: #f1f3f4; display: flex; align-items: center; gap: 8px; padding: 0 6px 0 10px; }
    .omni input { flex: 1; height: 26px; border: 0; outline: 0; background: none; font-size: 14px; line-height: 24px; color: #45494d; min-width: 0; padding-bottom: 2px; }
    .omni button { width: 24px; justify-content: center; }
    .who { margin-left: 11px; width: 22px; height: 22px; border-radius: 50%; background: #dadfe5; justify-content: center; }
    .dots { width: 20px; justify-content: center; margin-left: 12px; margin-right: -1px; }
    .marks { height: 31px; display: flex; align-items: center; padding: 0 16px 6px 14px; gap: 16px; }
    .marks a { display: flex; align-items: center; gap: 8px; white-space: nowrap; padding-top: 1px; }
    .more { margin-left: auto; }
  `];
  render() {
    return html`
      <div class="strip">
        <div class="tab">${icon("globe", "i16")}<span class="name">懒洋洋博客</span><button aria-label="关闭标签页">${icon("x", "i16")}</button></div>
        <div class="tab on">${icon("globe", "i16")}<span class="name">懒洋洋博客</span><button aria-label="关闭标签页">${icon("x", "i16")}</button></div>
        <button class="new" aria-label="新标签页">${icon("plus", "i16")}</button>
        <div class="win">
          <button aria-label="标签搜索">${icon("badge", "i16")}</button>
          <button aria-label="最小化">${icon("min", "i16")}</button>
          <button aria-label="还原">${icon("restore", "i16")}</button>
          <button aria-label="关闭">${icon("winclose", "i16")}</button>
        </div>
      </div>
      <div class="bar">
        <button class="nav" aria-label="后退">${icon("back", "i18")}</button>
        <button class="nav" aria-label="前进">${icon("forward", "i18")}</button>
        <button class="nav" aria-label="重新加载">${icon("reload", "i18")}</button>
        <div class="omni">${icon("info", "i16")}<input aria-label="地址" .value=${"localhost:8080/blogger/login"} />
          <button aria-label="密码">${icon("key", "i16")}</button><button aria-label="收藏">${icon("star", "i16")}</button></div>
        <button class="who" aria-label="用户">${icon("person", "i16")}</button>
        <button class="dots" aria-label="菜单">${icon("dots", "i16")}</button>
      </div>
      <nav class="marks">
        ${BOOKMARKS.map(([i, t]) => html`<a href="#">${icon(i, "i16")}<span>${t}</span></a>`)}
        <button class="more" aria-label="更多书签">${icon("more", "i12")}</button>
      </nav>`;
  }
}

/* ---------- rich text editor ---------- */

@customElement("rich-editor")
class RichEditor extends LitElement {
  static styles = [shared, css`
    :host { display: block; width: 952px; border: 1px solid #ccc; border-radius: 4px; background: #fff; overflow: hidden; font-size: 12px; line-height: 16px; }
    .tools { padding: 3px 3px 3px 4px; border-bottom: 1px solid #ccc; background: linear-gradient(#fff, #f2f2f2); box-shadow: 0 1px 4px rgba(0, 0, 0, .2); }
    .row { display: flex; height: 24px; align-items: center; }
    .tool { height: 24px; width: 24px; justify-content: center; flex: none; }
    .drop { width: 34px; justify-content: flex-start; padding-left: 2px; }
    .caret { border: 3px solid transparent; border-top: 4px solid #000; border-bottom: 0; flex: none; margin-left: 2px; }
    .sep { width: 9px; height: 20px; flex: none; padding-left: 3px; }
    .sep:first-child { width: 10px; }
    .sep::before { content: ""; display: block; width: 1px; height: 20px; background: #ccc; }
    .push { flex: 1; }
    .combo { width: 80px; height: 22px; margin-right: 3px; border: 1px solid #ccc; border-radius: 2px; background: #fff; display: flex; align-items: center; flex: none; position: relative; }
    .combo select { appearance: none; border: 0; background: none; width: 78px; height: 20px; padding-left: 5px; outline: 0; color: #111; }
    .combo .box { position: absolute; right: 0; top: 0; width: 9px; height: 20px; border-left: 1px solid #ccc; display: flex; align-items: center; pointer-events: none; }
    .area { height: 500px; outline: 0; }
    .foot { height: 26px; border-top: 1px solid #ccc; display: flex; justify-content: space-between; align-items: center; padding: 0 1px 0 4px; color: #111; }
    .count { color: #aaa; }
  `];
  private tool(t: Tool) {
    if (typeof t !== "string")
      return html`<span class="combo"><select aria-label=${t.select}><option>${t.select}</option></select><span class="box"><span class="caret"></span></span></span>`;
    if (t === "|") return html`<span class="sep"></span>`;
    if (t === ">") return html`<span class="push"></span>`;
    const drop = t.endsWith("+");
    const name = drop ? t.slice(0, -1) : t;
    return html`<button class=${classMap({ tool: true, drop })} aria-label=${name}>${icon(name)}${drop ? html`<span class="caret"></span>` : nothing}</button>`;
  }
  render() {
    return html`
      <div class="tools">${TOOLBAR.map((r) => html`<div class="row">${r.map((t) => this.tool(t))}</div>`)}</div>
      <div class="area" contenteditable="true" role="textbox" aria-label="博客内容"></div>
      <div class="foot"><span>元素路径:</span><span class="count">字数统计</span></div>`;
  }
}

/* ---------- page ---------- */

@customElement("app-root")
class AppRoot extends LitElement {
  static styles = [shared, css`
    :host { display: flex; flex-direction: column; height: 100vh; overflow: hidden; position: relative; background: #fff; color: #000; font: 12px/16px "Noto Sans", "Noto Sans CJK SC", sans-serif; }
    .head { flex: none; height: 79px; display: flex; background: #e0ecff; border: 1px solid #99b5e0; border-top-color: #a4b4d4; border-bottom: 2px solid #99b5e0; }
    .brand { display: flex; flex: 1; align-items: center; padding: 4px 0 0 9px; gap: 16px; }
    .logo { width: 67px; height: 64px; border-radius: 4px; background: #00a5a9; display: flex; align-items: center; justify-content: center; }
    .logo svg { width: 38px; height: 38px; }
    h1 { margin: 0; font: 500 41px/60px "Noto Sans CJK SC", sans-serif; color: #a5e4ff; -webkit-text-stroke: 2px #14a3ea; padding-bottom: 6px; }
    .user { display: flex; align-items: flex-end; padding: 0 15px 9px 0; }
    .user strong, .user .admin { font-size: 13px; }
    .user .admin { margin-right: 76px; }
    .user a { display: flex; align-items: center; gap: 5px; color: #44506e; }
    .mid { flex: 1; min-height: 0; display: flex; border-left: 1px solid #99b5e0; border-right: 1px solid #99b5e0; background: #e6eefc; }
    .side { width: 194px; flex: none; display: flex; flex-direction: column; border-right: 1px solid #99b5e0; background: #fff; }
    .bar { height: 27px; flex: none; display: flex; align-items: center; width: 100%; padding: 0 6px 0 5px; border-bottom: 1px solid #99b5e0; background: #e0ecff; color: #0e2d5f; font-weight: bold; text-align: left; }
    .bar .t { flex: 1; }
    .bar svg + .t { padding-left: 2px; }
    .bar.title { background: linear-gradient(#eff5ff, #e0ecff); }
    .bar.open { background: #fbec88; color: #000; }
    .bar.foot { border-bottom: 0; border-top: 1px solid #99b5e0; }
    .menu { flex: 1; min-height: 0; padding: 15px 15px; display: flex; flex-direction: column; align-items: flex-start; gap: 8px; }
    .menu a { display: flex; align-items: center; gap: 4px; height: 18px; color: #444; border: 1px solid transparent; }
    .menu a.on { border: 1px dotted #1a1a8c; }
    .main { flex: 1; min-width: 0; margin-left: 5px; border-left: 1px solid #99b5e0; background: #fff; display: flex; flex-direction: column; }
    .tabs { height: 29px; flex: none; background: #e0ecff; border-bottom: 1px solid #99b5e0; display: flex; align-items: flex-end; gap: 5px; padding-left: 4px; }
    .tabs .tab { height: 26px; display: flex; align-items: center; gap: 3px; padding: 0 9px; border: 1px solid #99b5e0; border-bottom: 0; border-radius: 5px 5px 0 0; background: linear-gradient(#eff5ff, #e0ecff); color: #0e2d5f; }
    .tabs .tab.on { height: 27px; margin-bottom: -1px; background: linear-gradient(#eff5ff, #fff); font-weight: bold; padding: 0 5px 0 9px; }
    .view { flex: 1; min-height: 0; display: flex; overflow: hidden; }
    .pad { flex: 1; min-width: 0; overflow: hidden; padding: 10px 11px 0 10px; }
    .panel { border: 1px solid #99b5e0; border-right: 0; border-bottom: 0; }
    .panel h2 { margin: 0; height: 27px; display: flex; align-items: center; padding-left: 5px; font-size: 12px; color: #0e2d5f; border-bottom: 1px solid #99b5e0; background: linear-gradient(#f2f7ff, #e0ecff); }
    .form { display: grid; grid-template-columns: 102px 1fr; row-gap: 22px; padding: 31px 0 40px 31px; align-items: center; }
    .form .top { align-self: start; }
    .field { display: flex; align-items: center; gap: 4px; }
    .text { width: 408px; height: 21px; border: 1px solid #767676; border-radius: 2px; background: #fff; padding: 0 2px; }
    .pick { width: 154px; height: 22px; border: 1px solid #99b5e0; display: flex; background: #fff; position: relative; }
    .pick select { appearance: none; border: 0; background: none; width: 152px; padding-left: 2px; outline: 0; }
    .pick .btn { position: absolute; right: 0; top: 0; width: 18px; height: 20px; background: #e0ecff; display: flex; align-items: center; justify-content: center; pointer-events: none; }
    .footer { flex: none; height: 26px; display: flex; border: 1px solid #99b5e0; border-top-width: 2px; background: #fff; }
    .footer p { flex: 1; margin: 0; text-align: center; line-height: 24px; padding: 2px 2px 0 0; }
    .desk { flex: none; height: 8px; overflow: hidden; display: flex; justify-content: flex-end; padding: 5px 74px 0 0; color: #fff; line-height: 12px;
      background: linear-gradient(90deg, #3a201b 0, #52402f 4%, #4a362a 15%, #6e6458 15%, #6e6458 17%, #54452f 18%, #5a4229 27%, #43221c 29%, #5c4a30 31%, #63492b 50%, #6b4b28 65%, #6e7a70 66%, #55705f 69%, #4d6a58 74%, #707c72 75%, #4c6654 77%, #68756c 81%, #455a4b 84%, #3d4f42 100%); }
    .mark { position: absolute; right: 14px; bottom: 7px; font: 300 20px/26px "Noto Sans CJK SC", sans-serif; color: #8c8c8c; white-space: nowrap; }
  `];
  render() {
    return html`
      <browser-frame></browser-frame>
      <header class="head">
        <div class="brand"><span class="logo">${icon("book")}</span><h1>懒洋洋个人博客</h1></div>
        <div class="user"><strong>欢迎${colon}</strong><span class="admin">admin</span><a href="#">${icon("power", "i14")}<span>返回浏览页</span></a></div>
        <scroll-rail size="93"></scroll-rail>
      </header>
      <div class="mid">
        <aside class="side">
          <div class="bar title"><span class="t">导航菜单</span><button aria-label="收起">${icon("chevLeft", "i14")}</button></div>
          <button class="bar open">${icon("gear", "i16")}<span class="t">常用操作</span>${icon("chevUp", "i14")}</button>
          <nav class="menu">
            <a class="on" href="#">${icon("write", "i16")}<span>写博客</span></a>
            <a href="#">${icon("review", "i16")}<span>评论审核</span></a>
          </nav>
          ${SECTIONS.map(([i, t]) => html`<button class="bar foot">${icon(i, "i16")}<span class="t">${t}</span>${icon("chevDown", "i14")}</button>`)}
        </aside>
        <main class="main">
          <div class="tabs">
            <a class="tab" href="#">${icon("home", "i16")}<span>首页</span></a>
            <div class="tab on">${icon("write", "i16")}<span>写博客</span><button aria-label="关闭">${icon("tabx", "i10")}</button></div>
          </div>
          <div class="view">
            <div class="pad">
              <section class="panel">
                <h2>编写博客</h2>
                <form class="form" @submit=${(e: Event) => e.preventDefault()}>
                  <label for="title">博客标题${colon}</label>
                  <div class="field"><input class="text" id="title" type="text" /></div>
                  <label for="kind">所属类别${colon}</label>
                  <div class="field"><span class="pick"><select id="kind"><option>请选择博客类别...</option></select><span class="btn">${icon("down", "i12")}</span></span></div>
                  <span class="top">博客内容${colon}</span>
                  <rich-editor></rich-editor>
                  <label for="words">关键字${colon}</label>
                  <div class="field"><input class="text" id="words" type="text" /><span>(多个关键字中间用空格隔开)</span></div>
                </form>
              </section>
            </div>
            <scroll-rail size="90"></scroll-rail>
          </div>
        </main>
      </div>
      <footer class="footer"><p>LingnanBlog 【懒洋洋博客】</p><scroll-rail short></scroll-rail></footer>
      <div class="desk">22:21</div>
      <div class="mark">CSDN @猿来入此金库</div>`;
  }
}
